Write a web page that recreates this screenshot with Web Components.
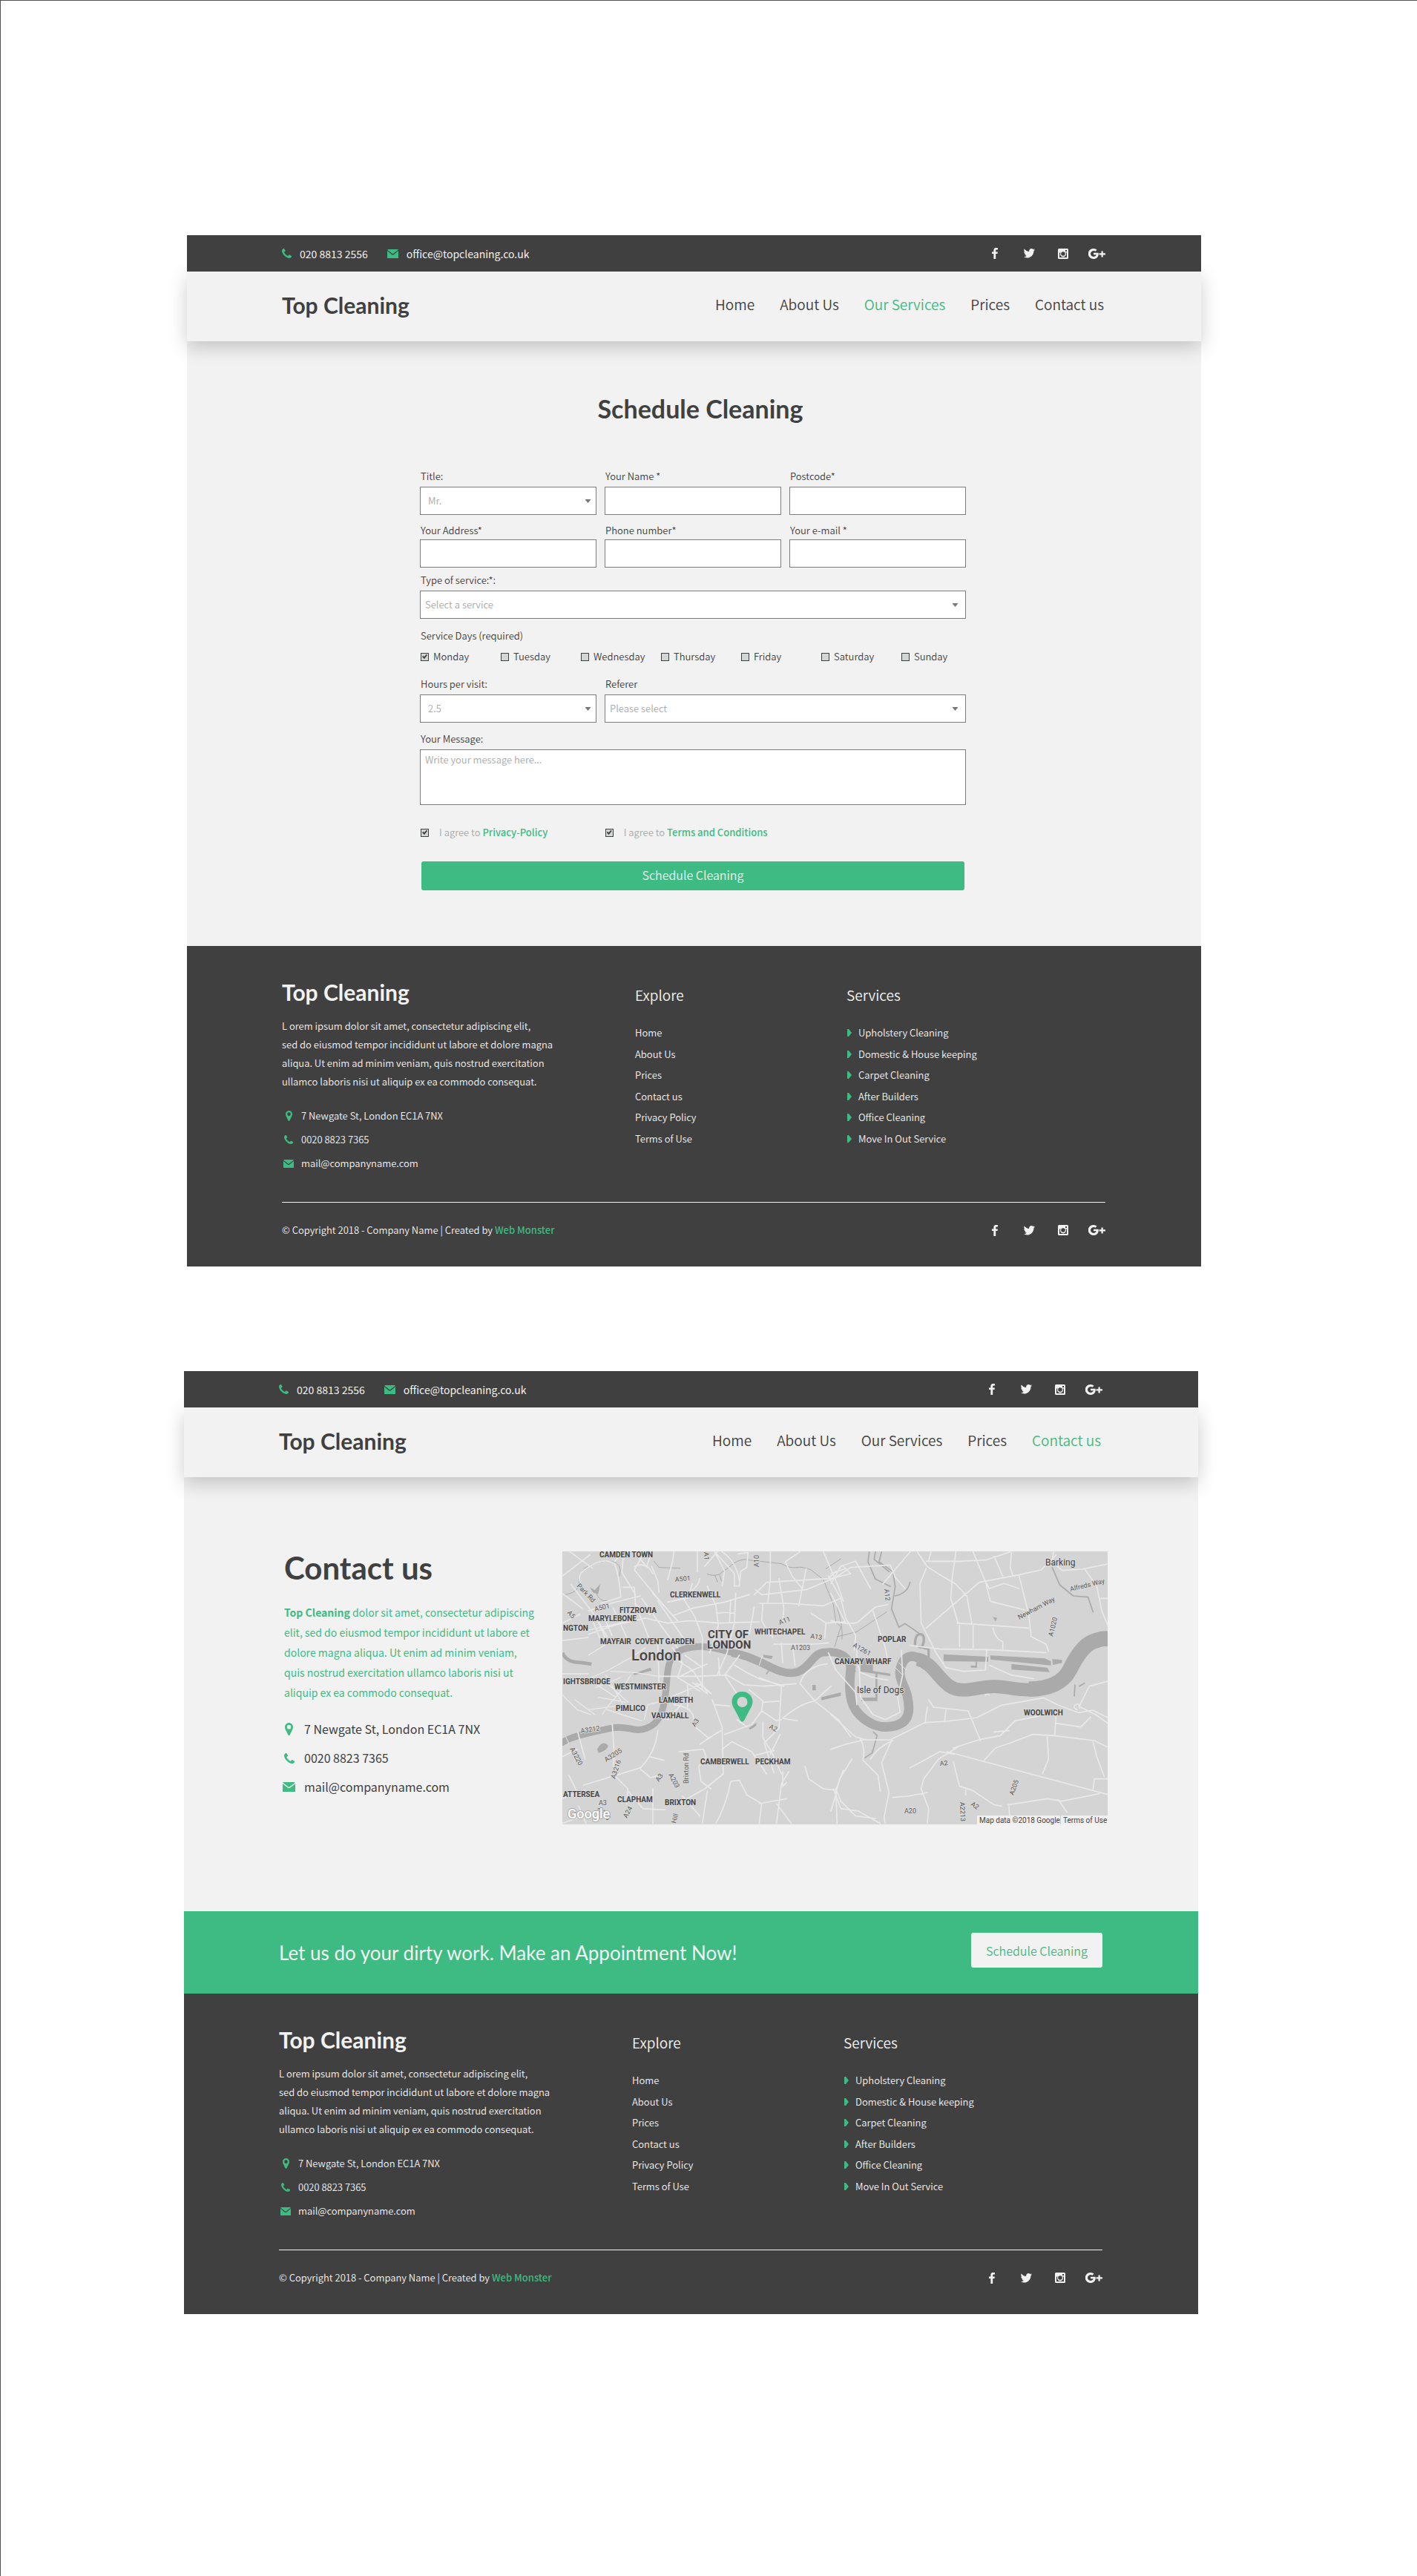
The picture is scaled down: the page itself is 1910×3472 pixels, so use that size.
<!DOCTYPE html>
<html lang="en">
<head>
<meta charset="utf-8">
<title>Top Cleaning</title>
<style>
  :root {
    --ink: #404040;
    --paper: #f2f2f2;
    --green: #3dbb82;
    --muted: #a9a9a9;
    --line: #7d7d7d;
    --body-font: "Noto Sans CJK SC", "Open Sans", sans-serif;
    --brand-font: Lato, "Open Sans", sans-serif;
  }
  * { box-sizing: border-box; }
  body {
    margin: 0;
    min-height: 100vh;
    padding: 316px 0 354px;
    background: #fff;
    border-top: 1px solid #555;
    border-left: 1px solid #555;
    color: var(--ink);
    font-family: var(--body-font);
    font-size: 13px;
    font-weight: 350;
    display: flex;
    flex-direction: column;
    gap: 141px;
  }
  .left { margin: 0 291px 0 251px; }
  .right { margin: 0 295px 0 247px; }
</style>
</head>
<body>
<site-page class="left">
  <top-bar></top-bar>
  <site-nav current="Our Services"></site-nav>
  <schedule-form></schedule-form>
  <site-footer></site-footer>
</site-page>
<site-page class="right">
  <top-bar></top-bar>
  <site-nav current="Contact us"></site-nav>
  <contact-section><city-map></city-map></contact-section>
  <call-to-action>Let us do your dirty work. Make an Appointment Now!</call-to-action>
  <site-footer></site-footer>
</site-page>

<script>
const BASE = `
  *, *::before, *::after { box-sizing: border-box; }
  a { color: inherit; text-decoration: none; }
  ul, h1, h2, h3, p { margin: 0; padding: 0; list-style: none; font-weight: inherit; }
`;

class Base extends HTMLElement {
  connectedCallback() {
    if (this.shadowRoot) return;
    this.attachShadow({ mode: 'open' }).innerHTML = `<style>${BASE}${this.css()}</style>${this.html()}`;
  }
  css() { return ':host{display:block}'; }
  html() { return '<slot></slot>'; }
}

const ICONS = {
  phone: ['192 128 1408 1408', '<path d="M1600 1240q0 27-10 70.5t-21 68.5q-21 50-122 106-94 51-186 51-27 0-53-3.500t-57.500-12.500-47-14.500-55.500-20.500-49-18q-98-35-175-83-127-79-264-216t-216-264q-48-77-83-175-3-9-18-49t-20.500-55.500-14.500-47-12.500-57.500-3.500-53q0-92 51-186 56-101 106-122 25-11 68.500-21t70.500-10q14 0 21 3 18 6 53 76 11 19 30 54t35 63.500 31 53.500q3 4 17.500 25t21.500 35.500 7 28.500q0 20-28.500 50t-62 55-62 53-28.500 46q0 9 5 22.500t8.500 20.500 14 24 11.500 19q76 137 174 235t235 174q2 1 19 11.500t24 14 20.500 8.500 22.500 5q18 0 46-28.500t53-62 55-62 50-28.500q14 0 28.500 7t35.500 21.500 25 17.500q25 15 53.500 31t63.500 35 54 30q70 35 76 53 3 7 3 21z"/>'],
  mail: ['0 0 30 24', '<path d="M1 0h28v2L15 13 1 2zM0 4l12 10q3 2.500 6 0L30 4v19q0 1-1 1H1q-1 0-1-1z"/>'],
  pin: ['0 0 20 30', '<path fill-rule="evenodd" d="M10 0a10 10 0 0 1 10 10c0 4-2 7-3.500 10L12 29q-2 2-4 0L3.500 20C2 17 0 14 0 10A10 10 0 0 1 10 0zm0 5a5 5 0 1 0 0 10 5 5 0 0 0 0-10z"/>'],
  facebook: ['479 12 864 1652', '<path d="M1343 12v264h-157q-86 0-116 36t-30 108v189h293l-39 296h-254v759h-306v-759h-255v-296h255v-218q0-186 104-288.500t277-102.500q147 0 228 12z"/>'],
  twitter: ['44 256 1640 1330', '<path d="M1684 408q-67 98-162 167 1 14 1 42 0 130-38 259.500t-115.500 248.500-184.500 210.500-258 146-323 54.500q-271 0-496-145 35 4 78 4 225 0 401-138-105-2-188-64.500t-114-159.500q33 5 61 5 43 0 85-11-112-23-185.500-111.500t-73.500-205.500v-4q68 38 146 41-66-44-105-115t-39-154q0-88 44-163 121 149 294.500 238.500t371.500 99.500q-8-38-8-74 0-134 94.500-228.500t228.500-94.500q140 0 236 102 109-21 205-78-37 115-142 178 93-10 186-50z"/>'],
  instagram: ['0 0 28 28', '<path fill-rule="evenodd" d="M3 0h22q3 0 3 3v22q0 3-3 3H3q-3 0-3-3V3q0-3 3-3zM4 11v12q0 1 1 1h18q1 0 1-1V11h-3a8 8 0 1 1-14 0zM20 4v4h4V4zM14 8.500a5.500 5.500 0 1 0 0 11 5.500 5.500 0 0 0 0-11z"/>'],
  google: ['0 0 46 28', '<path d="M14 11.500v5h7.500c-1 3.500-4 5.500-7.500 5.500a8 8 0 1 1 5-14.300l4-4A14 14 0 1 0 14 28c8 0 14-6 13.500-14l-.3-2.500zM35 7h4.500v5.500H46V17h-6.500v6H35v-6h-6v-4.500h6z"/>'],
  caret: ['0 0 6 10', '<path d="M0 0h2l4 5-4 5H0z"/>'],
  down: ['0 0 8 6', '<path d="M0 0h8v1L4 6 0 1z"/>']
};
const BOX = { phone: [13, 13], mail: [15, 12], pin: [10, 15], facebook: [8, 15], twitter: [16, 13], instagram: [14, 14], google: [23, 14], caret: [6, 10], down: [7, 5] };

customElements.define('site-icon', class extends Base {
  css() { return ':host{display:inline-flex;flex:none}svg{display:block;fill:currentColor}'; }
  html() {
    const n = this.getAttribute('name'), s = Number(this.getAttribute('scale') || 1);
    const [w, h] = BOX[n];
    return `<svg aria-hidden="true" preserveAspectRatio="none" width="${Math.round(w * s)}" height="${Math.round(h * s)}" viewBox="${ICONS[n][0]}">${ICONS[n][1]}</svg>`;
  }
});

customElements.define('site-page', class extends Base {
  css() { return ':host{display:block;background:var(--paper)}'; }
});

customElements.define('social-links', class extends Base {
  css() {
    return `:host{display:block;color:var(--paper)}
      ul{display:grid;grid-template-columns:repeat(4,23px);column-gap:23px;align-items:center;justify-items:center}
      a{display:flex}`;
  }
  html() {
    return '<ul>' + ['facebook', 'twitter', 'instagram', 'google'].map(n =>
      `<li><a href="#${n}" aria-label="${n}"><site-icon name="${n}"></site-icon></a></li>`).join('') + '</ul>';
  }
});

customElements.define('top-bar', class extends Base {
  css() {
    return `:host{display:flex;justify-content:space-between;align-items:center;height:49px;
      padding:0 129px 0 128px;background:var(--ink);color:var(--paper);font-size:14px;font-weight:400;line-height:20px;position:relative;z-index:1}
      div{display:flex;gap:26px}
      a{display:flex;align-items:center;gap:11px}
      site-icon{color:var(--green)}`;
  }
  html() {
    return `<div><a href="tel:02088132556"><site-icon name="phone"></site-icon>020 8813 2556</a>
      <a href="mailto:office@topcleaning.co.uk"><site-icon name="mail"></site-icon>office@topcleaning.co.uk</a></div>
      <social-links></social-links>`;
  }
});

customElements.define('site-nav', class extends Base {
  css() {
    return `:host{display:flex;justify-content:space-between;align-items:center;height:94px;padding:0 131px 4px 128px;
      background:var(--paper);box-shadow:0 8px 24px rgba(0,0,0,.2)}
      .logo{font:700 30px/40px var(--brand-font)}
      ul{display:flex;gap:34px;padding-bottom:2px;font-size:19px;line-height:28px}
      .on{color:var(--green)}`;
  }
  html() {
    const cur = this.getAttribute('current');
    return `<a class="logo" href="#top">Top Cleaning</a><nav><ul>` +
      ['Home', 'About Us', 'Our Services', 'Prices', 'Contact us'].map(t =>
        `<li><a href="#"${t === cur ? ' class="on" aria-current="page"' : ''}>${t}</a></li>`).join('') + '</ul></nav>';
  }
});

customElements.define('schedule-form', class extends Base {
  css() {
    return `:host{display:block;padding:71px 317px 75px 314px;line-height:20px}
      h1{font:700 34px/40px var(--brand-font);text-align:center;padding-left:20px;margin-bottom:61px}
      form{display:flex;flex-direction:column}
      .row{display:grid;grid-template-columns:repeat(3,1fr);column-gap:11px}
      .field{display:flex;flex-direction:column;gap:4px}
      .wide{grid-column:span 2}
      .field>label{padding-left:1px}
      .tight .field{gap:2px}
      input,select,textarea{font:350 13px/20px var(--body-font);color:var(--muted);border-radius:0}
      .field input,select,textarea{width:100%;height:38px;border:1px solid var(--line);background:#fff;margin:0;padding:0 6px;display:block}
      select{appearance:none;grid-area:1/1}
      .inset select{padding-left:10px}
      textarea{height:75px;padding:3px 6px;resize:none}
      textarea::placeholder{color:var(--muted)}
      .select{display:grid;align-items:center}
      .select site-icon{grid-area:1/1;justify-self:end;margin-right:11px;color:#777;pointer-events:none}
      .inset site-icon{margin-right:8px}
      .tight{margin:11px 0 7px}
      fieldset{border:0;margin:13px 0 17px;padding:0 0 0 1px;min-width:0}
      legend{padding:0;margin-bottom:8px}
      .days{display:grid;grid-template-columns:repeat(7,108px)}
      .check{display:flex;align-items:center;gap:6px}
      .check input{appearance:none;flex:none;margin:0;width:11px;height:11px;border:1px solid var(--ink);background:#d2d6d5;display:grid;place-items:center}
      .check input:checked::before{content:"";width:7px;height:7px;background:var(--ink);clip-path:polygon(0 50%,18% 32%,40% 55%,82% 5%,100% 22%,42% 95%)}
      .message{margin-top:12px}
      .agree{margin:27px 0 29px;padding-left:1px;color:var(--muted)}
      .agree .check{gap:14px}
      .agree a{color:var(--green);font-weight:500}
      button{height:39px;border:0;border-radius:3px;margin:0 2px;padding:0 0 3px;background:var(--green);color:var(--paper);font:350 16px/24px var(--body-font)}`;
  }
  html() {
    const sel = (id, label, value, cls = '') => `<div class="field ${cls}"><label for="${id}">${label}</label>
      <div class="select"><select id="${id}"><option>${value}</option></select><site-icon name="down"></site-icon></div></div>`;
    const inp = (id, label, type = 'text') => `<div class="field"><label for="${id}">${label}</label><input id="${id}" type="${type}"></div>`;
    const day = (d, i) => `<label class="check"><input type="checkbox"${i ? '' : ' checked'}>${d}</label>`;
    return `<h1>Schedule Cleaning</h1><form>
      <div class="row">${sel('title', 'Title:', 'Mr.', 'inset')}${inp('name', 'Your Name *')}${inp('postcode', 'Postcode*')}</div>
      <div class="row tight">${inp('address', 'Your Address*')}${inp('phone', 'Phone number*', 'tel')}${inp('email', 'Your e-mail *', 'email')}</div>
      ${sel('service', 'Type of service:*:', 'Select a service')}
      <fieldset><legend>Service Days (required)</legend><div class="days">
      ${['Monday', 'Tuesday', 'Wednesday', 'Thursday', 'Friday', 'Saturday', 'Sunday'].map(day).join('')}</div></fieldset>
      <div class="row">${sel('hours', 'Hours per visit:', '2.5', 'inset')}${sel('referer', 'Referer', 'Please select', 'wide')}</div>
      <div class="field message"><label for="message">Your Message:</label><textarea id="message" placeholder="Write your message here..."></textarea></div>
      <div class="row agree"><label class="check"><input type="checkbox" checked><span>I agree to <a href="#privacy">Privacy-Policy</a></span></label>
      <label class="check wide"><input type="checkbox" checked><span>I agree to <a href="#terms">Terms and Conditions</a></span></label></div>
      <button type="button">Schedule Cleaning</button></form>`;
  }
});

customElements.define('contact-list', class extends Base {
  css() {
    return `:host{display:block;line-height:var(--row,32px)}
      a{display:grid;grid-template-columns:var(--cell,18px) auto;column-gap:var(--gap,8px);align-items:center;justify-content:start}
      site-icon{color:var(--green);justify-self:center}`;
  }
  html() {
    const s = this.getAttribute('scale') || 1;
    return '<ul>' + [['pin', '#map', '7 Newgate St, London EC1A 7NX'], ['phone', 'tel:002088237365', '0020 8823 7365'], ['mail', 'mailto:mail@companyname.com', 'mail@companyname.com']]
      .map(([i, h, t]) => `<li><a href="${h}"><site-icon name="${i}" scale="${s}"></site-icon>${t}</a></li>`).join('') + '</ul>';
  }
});

customElements.define('site-footer', class extends Base {
  css() {
    return `:host{display:block;background:var(--ink);color:var(--paper);padding:42px 129px 34px 128px}
      .cols{display:grid;grid-template-columns:476fr 285fr 349fr;align-items:start;margin-bottom:35px}
      .logo{font:700 30px/40px var(--brand-font);margin-bottom:13px}
      p{line-height:25px;margin-bottom:18px}
      contact-list{margin-bottom:1px}
      section{padding-top:9px}
      h3{font-size:19px;line-height:30px;margin-bottom:26px}
      section ul{display:flex;flex-direction:column;justify-content:space-between;height:163px;line-height:20px}
      section a{display:flex;align-items:center;gap:9px}
      section site-icon{color:var(--green);margin-left:1px}
      .base{border-top:1px solid var(--paper);padding-top:22px;display:flex;justify-content:space-between;align-items:center;line-height:30px}
      .base a{color:var(--green);font-weight:500}`;
  }
  html() {
    return `<div class="cols"><div><h2 class="logo">Top Cleaning</h2>
      <p>L orem ipsum dolor sit amet, consectetur adipiscing elit,<br>sed do eiusmod tempor incididunt ut labore et dolore magna<br>aliqua. Ut enim ad minim veniam, quis nostrud exercitation<br>ullamco laboris nisi ut aliquip ex ea commodo consequat.</p>
      <contact-list scale="0.9"></contact-list></div>
      <section><h3>Explore</h3><ul>${['Home', 'About Us', 'Prices', 'Contact us', 'Privacy Policy', 'Terms of Use'].map(t => `<li><a href="#">${t}</a></li>`).join('')}</ul></section>
      <section><h3>Services</h3><ul>${['Upholstery Cleaning', 'Domestic &amp; House keeping', 'Carpet Cleaning', 'After Builders', 'Office Cleaning', 'Move In Out Service'].map(t => `<li><a href="#"><site-icon name="caret"></site-icon>${t}</a></li>`).join('')}</ul></section></div>
      <div class="base"><span>© Copyright 2018 - Company Name | Created by <a href="#">Web Monster</a></span><social-links></social-links></div>`;
  }
});

customElements.define('contact-section', class extends Base {
  css() {
    return `:host{display:grid;grid-template-columns:375px 1fr;align-items:start;padding:100px 122px 117px 135px}
      h1{font:700 42px/44px var(--brand-font);margin-bottom:25px}
      p{font-size:14px;font-weight:400;line-height:27px;color:var(--green);margin-bottom:16px}
      b{font-weight:700}
      contact-list{--row:39px;--cell:13px;--gap:14px;font-size:16px;font-weight:400}`;
  }
  html() {
    return `<div><h1>Contact us</h1>
      <p><b>Top Cleaning</b> dolor sit amet, consectetur adipiscing<br>elit, sed do eiusmod tempor incididunt ut labore et<br>dolore magna aliqua. Ut enim ad minim veniam,<br>quis nostrud exercitation ullamco laboris nisi ut<br>aliquip ex ea commodo consequat.</p>
      <contact-list scale="1.1"></contact-list></div><slot></slot>`;
  }
});

customElements.define('call-to-action', class extends Base {
  css() {
    return `:host{display:flex;justify-content:space-between;align-items:flex-start;padding:29px 129px 28px 128px;background:var(--green);color:var(--paper)}
      h2{font:400 26px/54px var(--brand-font)}
      button{width:177px;height:47px;border:0;border-radius:3px;padding:0;background:var(--paper);color:var(--green);font:350 16px/24px var(--body-font)}`;
  }
  html() { return '<h2><slot></slot></h2><button type="button">Schedule Cleaning</button>'; }
});

customElements.define('city-map', class extends Base {
  css() {
    return `:host{display:block}
      svg{display:block;width:100%;height:auto;background:#d4d4d4}
      text{font-family:Roboto,sans-serif;font-weight:400;fill:#444;stroke:#d9d9d9;stroke-width:2px;paint-order:stroke;stroke-linejoin:round}
      .area{font-size:10px;font-weight:700}
      .road{font-size:9px;fill:#5a5a5a}
      .town{font-size:12px}
      .medium{font-weight:500}
      .bold{font-weight:700}
      .note{font-size:10px;stroke:none}`;
  }
  html() {
    const area = [[205,83,'CAMDEN TOWN'],[489,245,'CLERKENWELL'],[286,309,'FITZROVIA'],[158,342,'MARYLEBONE'],[56,381,'NGTON'],[206,435,'MAYFAIR'],[348,434,'COVENT GARDEN'],[832,395,'WHITECHAPEL'],[58,597,'IGHTSBRIDGE'],[265,619,'WESTMINSTER'],[443,671,'LAMBETH'],[271,706,'PIMLICO'],[414,734,'VAUXHALL'],[613,921,'CAMBERWELL'],[833,920,'PECKHAM'],[56,1052,'ATTERSEA'],[275,1073,'CLAPHAM'],[467,1086,'BRIXTON'],[1330,426,'POPLAR'],[1154,516,'CANARY WHARF'],[1921,722,'WOOLWICH']];
    const road = [[511,184,'A501',-5],[186,302,'A501',-14],[112,202,'Park Rd',46],[72,308,'A5',48],[850,124,'A10',-90],[626,62,'A1',88],[934,357,'A11',-20],[1056,410,'A13',8],[978,460,'A1203',0],[128,794,'A3212',-8],[84,858,'A3220',62],[230,912,'A3205',-32],[266,980,'A3216',-72],[592,770,'A3',-58],[888,774,'A2',28],[443,994,'A3',-55],[484,962,'A203',62],[563,1000,'Brixton Rd',-90],[200,1085,'A3',0],[314,1140,'A24',-62],[512,1160,'Hill',-75],[194,1102,'A205',50],[1356,214,'A12',84],[1902,336,'Newham Way',-28],[2108,222,'Alfreds Way',-14],[2038,404,'A1020',-76],[1228,444,'A1261',30],[1580,926,'A2',-6],[1878,1046,'A205',-70],[1438,1120,'A20',0],[1662,1074,'A2213',88],[1704,1086,'A2',34]];
    const at = (x, y) => [Math.round((x - 54) / 3), Math.round((y - 60) / 3)];
    const areas = area.map(([x, y, t]) => { const [a, b] = at(x, y); return `<text class="area" x="${a}" y="${b}">${t}</text>`; }).join('');
    const roads = road.map(([x, y, t, r]) => { const [a, b] = at(x, y); return `<text class="road" transform="translate(${a} ${b}) rotate(${r})">${t}</text>`; }).join('');
    return `<svg viewBox="0 0 735 368" role="img" aria-label="Map of London">
    <g transform="scale(.33333) translate(-54 -60)" fill="none" stroke-linecap="round" stroke-linejoin="round">
      <g stroke="#aaa" stroke-linecap="butt">
        <path stroke-width="27" d="M45 838C90 805 180 790 250 775S340 795 395 775 465 700 473 620 475 480 540 457 660 445 760 475"/>
        <path stroke-width="33" d="M740 470C800 480 850 505 900 530S1000 565 1040 525 1080 465 1140 467 1215 500 1225 550"/>
        <path stroke-width="38" d="M1222 520C1210 620 1215 680 1255 720S1340 780 1400 765 1460 700 1450 650 1405 570 1425 520 1480 480 1520 505"/>
        <path stroke-width="54" d="M1490 496C1550 510 1570 570 1620 605S1740 605 1800 606 1900 625 1960 618"/>
        <path stroke-width="62" d="M1940 617C2020 617 2080 590 2105 540S2160 440 2200 425 2250 412 2270 415"/>
        <path stroke-width="14" d="M54 470Q70 505 110 508T172 516"/>
      </g>
      <g fill="#ababab" stroke="none">
        <path d="M340 555l70-25 5 12-70 18zM165 205l20 12 22-25-8 40-20-5zM195 860q20-40 45-15-5 20-40 30zM1100 650l80-20v14l-78 18zM1596 476l180 10v20l-180-2zM1785 481l220 12 25 12v16l-245-24zM1870 515l145 15 10 18-155-10zM1725 505h6v25h-25v-8h19zM1260 490l50 4v50l70 10v10l-120-18zM1320 550h8v115h-65v-14h57zM2035 495l40 4v12l-38 8zM808 775l30-22v12l-24 16zM865 478l40 5-5 12-32-6zM1065 600h14v22h-14zM1795 325l18 4-8 14z"/>
      </g>
      <g stroke="#aaa" stroke-width="5">
        <path stroke-width="3" d="M140 130Q200 95 250 100T285 160M190 225q10 40 50 35M140 135Q105 180 130 200M60 235q45-5 55-25M425 100l20 25 85 3M640 152q30 10 50 0l60-45q30-20 60-12l130 15q35 20 60 15t60 10l50 40 40 100 10 70 20 20-25 80M670 155l12 30M690 155l8 25M1120 130l60-40M1165 405l80-20 120-80M1165 285q25 80 20 130"/>
        <path d="M1295 62l-5 40 30 70 60 30M1345 62l-10 40 55 40 10 60-15 90 30 75 25-15 55 38M1400 240q50-10 60-55M1320 62l-5 30 60 50M2035 125l30 70 55 45 60 5 20 60"/>
        <path stroke-width="10" d="M1480 440q0-45 20-45t15 30-20 20M1500 445l35 10v30"/>
        <path d="M1312 790l15 15-20 70-30 20M890 540l-10 15M2127 600l-3 45M2145 605l20-12"/>
      </g>
      <g stroke="#e9e9e9" stroke-width="5">
        <path d="M54 160l110-85M85 62l90 65M150 130Q105 160 135 200M150 130Q220 80 265 110 285 160 290 245l-80 25M265 100l35-38M300 85l-5 60 55 90M300 205h45l5 70 60 40M345 62l50 60 20-60M380 75l-35 60 70 85 50 60M415 120l25 60 5 45M480 175l20-75 5-38M345 120q50-20 75 30M600 62v80M700 200l10-60-40-78M630 120l50-58M765 70l40-5-5 60-25 15-5 60h-20v-50l-70-78M700 62q60 40 70 120"/>
        <path d="M54 230l80 60M90 195l100 130 40 90M160 300l90-30 120-30M160 395l100-35 130-30 90 20 90-10 120 10 160-5M180 350l30 70M200 345l35 60M225 330l30 70M54 350l70-35M54 420l105-12M160 378l160-35M260 290l60 130M350 275l60 150M375 250l85 120 60 80M420 230l100 110M440 260l110 160M540 245l50 80 30 80v210M480 265l70-15 95-25M640 200l35 80 10 80-35 110M755 230l-5 120-30 120-40 90M735 255l-5 90M680 310q40-5 70 0M500 320l80-30 130-25 100-30M560 250l20-60M610 170q-5 30-35 50"/>
        <path d="M830 235l50-50 250-15 30-30M835 215l25 20 180-20 120-50 60-40 160-10 20 50 40 45M850 270h110l150 10 70-30M895 62v110l-10 95M930 170l20 120-5 50M1015 62l-60 40 30 60 40 50M1040 130l-30 150M1110 62l60 140 20 60M1140 230l50 100 10 20M865 270l-5 70 35 60M905 410l-15-40M830 285l-20 110M910 435h160l60-5M985 440l10 80M940 430l5 80M1060 310l60 40 80-5M1120 350l-5 60"/>
        <path stroke-width="4" d="M54 555h105M160 480l110-70M240 540l90-50 60-40M240 540l-90 40M250 545l100 5 90 15M180 590l90 60M330 560l-35 60-60 70-20 30M220 580l100 90M230 560l70 120M190 610l100-40M200 650l110 20M105 660l80 60M160 700l150-20M54 640l60 60 55 20M235 700l60 20 80 25M330 680l60 10M385 740l15-60 60-15"/>
        <path d="M440 440l5 150M520 500l60 40 60 90M500 450l40 60-20 60 90 55M520 570l60-30 60-25M440 565h160l120-5M490 650l70-30 60-25M550 480l70 50M655 635q-40-40-60-40M580 590l60 45M505 680q80 10 80 60M480 740l55-60M560 600q5 50 0 90M690 560l-5-70M710 560l60 90M720 560l70 40 80 5 130-10M710 560l60-80M750 520l50 30 50 25 100 30M850 570l90 35-10 170-60 60 40 120M1015 595l60 70 65-60M1015 595q20-70 110-80M1130 470l30 70 80 90 5 50M1080 670l90 70 50 70M1075 665q-60 10-130 70l60 10M810 620l55 45-5 40-40 55-110 40M865 670l70-5M860 705l60 40 20-5M660 660l40 110 5 190-75 60-90 50M670 680l60 5M585 765l60 50 50-30M610 840l75-50M760 740l40 30M865 750v65l35 55 40 90"/>
        <path d="M116 790l30 110M256 760l8 120-5 80 60 60-5 60M440 785q-10 90-70 150l-230 70M54 890l60-30M80 965l35 70M54 1060l90-35M370 940l40 35 40-10M405 890l60 15M320 1030l60 70 90 5M420 1020v140M540 1050l70 80M640 1030l-20 130M525 870l100-10 10 30-30 40 10 60 40 30M700 860l40-30 80 40 60 90M735 990l35-5 30 60 60 35-10 80M735 990q-20 100-60 170M850 1080l110-20M935 800l-40 80M970 950l-30 50-20 160M945 950v60l15-15M1035 930l15 50 60 40 50 5 30-80M1160 1020l5 140M920 1080l60 80M1160 1020l20 50 60 60 80 10M830 885l80-20M54 1160l80-30M120 1090l30 70"/>
        <path d="M1140 190l40-70 60-20 60 110M1140 150l60-20M1140 170l80-20-30-30M1130 160l50 90 20 80 40 70-5 60M1140 340q80 20 110 5l70-60 50-10M1310 300l50 150 10 50M1460 62l-110 130M1490 62l40 60 55 35 60 35 45 50 20 110M1525 100h130l110-5 100-33M1545 62l-10 35M1645 62l-15 110-5 80 30 100M1525 130l-25 60 5 160 60 120 40 60 70 15 90-5 5-80M1525 370l215-185 160-30 90-20 60-60M1715 62l50 120 20 80 140 35M1770 190l10 20 60-20 60 20M1800 80l35 80M1870 65l-5 60 10 30M1900 155l40 160 10 90 60 30 10 30M1650 350l80 5 210 15M1660 360v85M1715 360v90M1795 370q10 45 40 55v30M1460 440l120 15 190 2 240 12M1780 520l90 40 90 15M2040 62l-5 40 40 35 80-5 100-20M2165 130l50 70 20 100 25 60M2230 250h30M1245 430v70l10 40 5 110 50 70 50 20 60-30-10-60 20-90-5-100M1260 550l50 20 60 10"/>
        <path d="M1140 720l100 90 40 12h100l140-70 90-5 120-15 100-50 170-30 60 30 80 30 60-10 60 30M1535 660l20 30 140 15 50 120M1530 690l-10 65M1605 700l-5 50M1745 820l80-15 60-60 100-20M1800 790l60-5M2050 730l-5 75-90-5-90 35-60 20-45 50M2045 805l160 20 50 25M2050 755l100 15 40-40M2145 685l40-80 75-20M2150 690l60 30 50 35M2145 695q0-25-15-15t5 20M1460 935l120-65 60 10M1655 850l-80 50-60 80-10 40 30 80-5 60M1610 870l650 173M1745 820l-110 35M1780 640q-10-5-15 0M2015 810l5 90-25 60M2200 830l15 60 30 80M2200 1025l5-45h60M1635 910l25 100 50 15 90 60 30 5M1685 1045v-30M1855 1085l160-25 60 10 150-30M2060 1065l35 50M1860 1090l5 70M1385 825l-40 90 30 120-20 100 5 25M1390 1055l60-5 80-15M1270 905l60 60 10 65M1225 900l-50 80-20 80-15 50M1150 1020l30 80 70 10 90 50M1260 820q20 40 10 80M1140 860l60-20 80-20M1300 900q30-50 90-75"/>
        <path stroke-width="3" d="M1400 530l30 30M1415 510l30 30M862 485l-12 35M68 810l12 25"/>
      </g>
    </g>
    ${areas}${roads}
    <text class="medium" x="93" y="147" font-size="20">London</text>
    <text class="bold" x="196" y="117" font-size="15">CITY OF</text>
    <text class="bold" x="195" y="131" font-size="15">LONDON</text>
    <text class="town" x="651" y="19">Barking</text>
    <text class="town" x="397" y="191">Isle of Dogs</text>
    <text class="medium" x="7" y="360" font-size="18" style="fill:#fff;stroke:#aaa">Google</text>
    <path d="M242.500 189c8 0 14 6 14 13.500 0 5-3 9-5 13l-6.500 12.500q-2.500 3-5 0l-6.500-12.500c-2-4-5-8-5-13 0-7.500 6-13.500 14-13.500zm0 7a7 7 0 1 0 0 14 7 7 0 0 0 0-14z" fill="#3dbb82" fill-rule="evenodd"/>
    <path d="M559 356h176v12H559z" fill="#f0f0f0"/><path d="M671 356h1v12h-1z" fill="#ccc"/>
    <text class="note" x="562" y="366">Map data ©2018 Google</text>
    <text class="note" x="675" y="366">Terms of Use</text>
    </svg>`;
  }
});
</script>
</body>
</html>
